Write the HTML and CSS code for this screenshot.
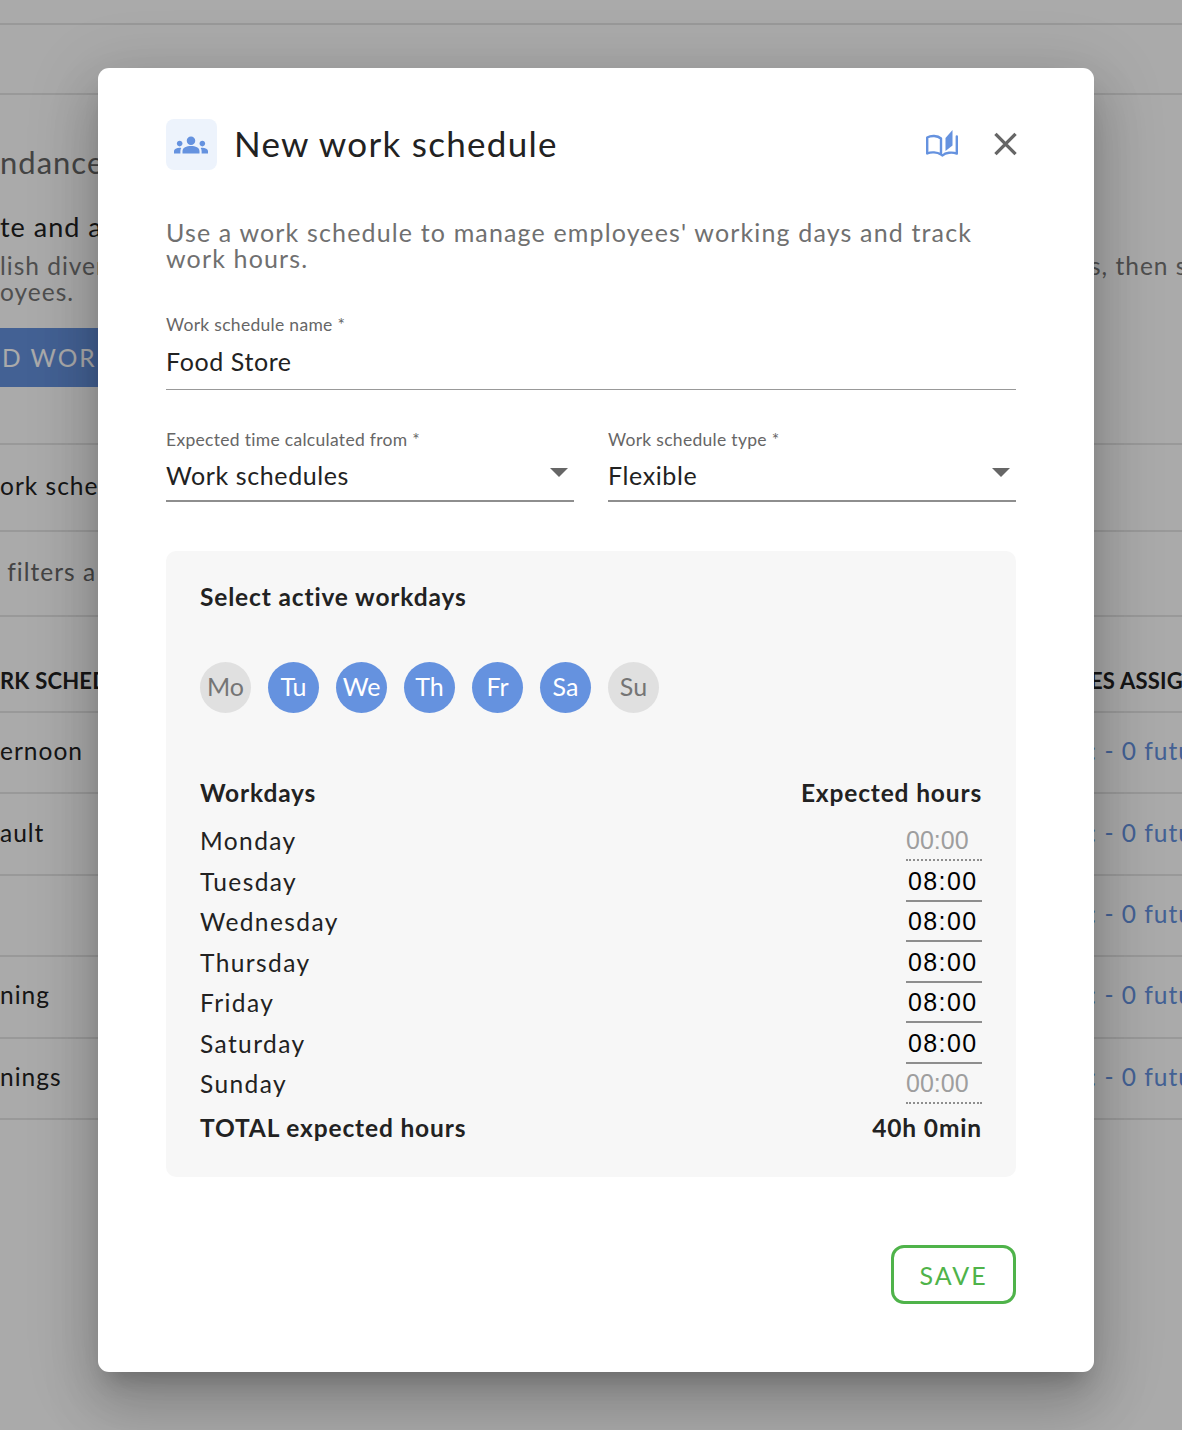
FILE: index.html
```html
<!DOCTYPE html>
<html lang="en">
<head>
<meta charset="utf-8">
<title>New work schedule</title>
<link rel="stylesheet" href="styles.css">
</head>
<body>
<div class="page">
  <div class="bg-band band-a"></div>
  <div class="bg-band band-b"></div>
  <section class="intro">
    <div class="intro-title">ndance</div>
    <div class="intro-sub">te and a</div>
    <div class="intro-text">
      <div class="intro-line"><span class="col-left">lish diver</span><span>s, then s</span></div>
      <div class="intro-line">oyees.</div>
    </div>
    <div class="add-btn">D WORK</div>
  </section>
  <div class="bg-row row-search"><span class="col-left">ork sche</span></div>
  <div class="bg-row row-filter"><span class="col-left">&nbsp;filters a</span></div>
  <div class="bg-row row-head"><span class="col-left">RK SCHED</span><span class="col-right">ES ASSIGN</span></div>
  <div class="bg-row"><span class="col-left">ernoon</span><span class="col-right link">: - 0 futu</span></div>
  <div class="bg-row"><span class="col-left">ault</span><span class="col-right link">: - 0 futu</span></div>
  <div class="bg-row"><span class="col-left"></span><span class="col-right link">: - 0 futu</span></div>
  <div class="bg-row"><span class="col-left">ning</span><span class="col-right link">: - 0 futu</span></div>
  <div class="bg-row"><span class="col-left">nings</span><span class="col-right link">: - 0 futu</span></div>
</div>
<div class="overlay"></div>
<main class="modal">
  <header class="modal-head">
    <div class="head-icon">
      <svg class="groups" viewBox="0 0 24 24" aria-hidden="true"><path d="M4 13c1.100 0 2-.9 2-2s-.9-2-2-2-2 .9-2 2 .9 2 2 2zm1.130 1.100c-.37-.06-.74-.1-1.130-.1-.99 0-1.930.21-2.780.58C.48 14.900 0 15.620 0 16.430V18h4.500v-1.610c0-.83.23-1.610.63-2.290zM20 13c1.100 0 2-.9 2-2s-.9-2-2-2-2 .9-2 2 .9 2 2 2zm4 3.430c0-.81-.48-1.530-1.220-1.850-.85-.37-1.790-.58-2.780-.58-.39 0-.76.04-1.130.1.4.68.63 1.460.63 2.290V18H24v-1.570zm-7.760-2.780c-1.170-.52-2.610-.9-4.240-.9-1.630 0-3.070.39-4.240.9C6.680 14.130 6 15.210 6 16.390V18h12v-1.610c0-1.180-.68-2.260-1.760-2.740zM12 12c1.660 0 3-1.340 3-3s-1.340-3-3-3-3 1.340-3 3 1.340 3 3 3z"/></svg>
    </div>
    <h1 class="modal-title">New work schedule</h1>
    <svg class="book" viewBox="0 0 32 27" aria-hidden="true">
      <path class="book-line" d="M1.200 7.500C5 5.300 11.500 5.300 15 8.500V24.500C11 22 5 21.800 1.200 23.500ZM15 24.500L16.500 25.500C19.500 22.500 26 21.800 30.800 23.500V6.500"/>
      <path class="book-fill" d="M19.500 8L26.500 0V15.500L19.500 21Z"/>
    </svg>
    <svg class="close" viewBox="0 0 24 24" aria-hidden="true"><path d="M1.500 1.500L22.500 22.500M22.500 1.500L1.500 22.500"/></svg>
  </header>
  <p class="intro-copy">Use a work schedule to manage employees' working days and track work hours.</p>
  <div class="field name-field">
    <label class="field-label">Work schedule name *</label>
    <div class="field-value">Food Store</div>
  </div>
  <div class="select-row">
    <div class="field select">
      <label class="field-label">Expected time calculated from *</label>
      <div class="field-value select-value">Work schedules<i class="caret"></i></div>
    </div>
    <div class="field select">
      <label class="field-label">Work schedule type *</label>
      <div class="field-value select-value">Flexible<i class="caret"></i></div>
    </div>
  </div>
  <section class="panel">
    <h2 class="panel-title">Select active workdays</h2>
    <div class="days">
      <span class="day">Mo</span>
      <span class="day on">Tu</span>
      <span class="day on">We</span>
      <span class="day on">Th</span>
      <span class="day on">Fr</span>
      <span class="day on">Sa</span>
      <span class="day">Su</span>
    </div>
    <div class="hours-head"><span>Workdays</span><span>Expected hours</span></div>
    <div class="hours-row"><span>Monday</span><span class="time off">00:00</span></div>
    <div class="hours-row"><span>Tuesday</span><span class="time">08:00</span></div>
    <div class="hours-row"><span>Wednesday</span><span class="time">08:00</span></div>
    <div class="hours-row"><span>Thursday</span><span class="time">08:00</span></div>
    <div class="hours-row"><span>Friday</span><span class="time">08:00</span></div>
    <div class="hours-row"><span>Saturday</span><span class="time">08:00</span></div>
    <div class="hours-row"><span>Sunday</span><span class="time off">00:00</span></div>
    <div class="hours-total"><span>TOTAL expected hours</span><span>40h 0min</span></div>
  </section>
  <div class="actions"><button class="save" type="button">SAVE</button></div>
</main>
</body>
</html>
```
FILE: styles.css
```css
* { box-sizing: border-box; }
html, body { margin: 0; height: 100%; }
body {
  width: 1182px;
  height: 1430px;
  overflow: hidden;
  position: relative;
  background: #fff;
  font-family: Lato, "Noto Sans", sans-serif;
  color: #222;
}

/* page behind the dialog */
.page { width: 1182px; height: 1430px; overflow: hidden; font-size: 24.500px; letter-spacing: 1px; color: #222; }
.bg-band { border-bottom: 2px solid #e6e6e6; }
.band-a { height: 25px; }
.band-b { height: 70px; }
.intro { height: 350px; border-bottom: 2px solid #e6e6e6; position: relative; }
.intro-title { padding-top: 46px; height: 113px; font-size: 31px; line-height: 42px; color: #666; }
.intro-sub { height: 45px; line-height: 38px; font-size: 27px; }
.intro-text { height: 75px; line-height: 26px; color: #777; font-size: 24.500px; }
.intro-line { display: flex; white-space: nowrap; }
.add-btn { width: 110px; height: 59px; background: #6592df; color: #fff; line-height: 59px; padding-left: 2px; letter-spacing: 2px; white-space: nowrap; overflow: hidden; }
.col-left { flex: none; width: 1090px; }
.col-right { flex: none; }
.bg-row { display: flex; align-items: center; height: 81.400px; padding-bottom: 4px; border-bottom: 2px solid #e6e6e6; white-space: nowrap; }
.row-search { height: 87px; }
.row-filter { height: 85px; color: #666; }
.row-head { height: 96px; padding: 50px 0 0; font-size: 22px; font-weight: 700; letter-spacing: .2px; align-items: flex-start; }
.link { color: #6592df; }

.overlay { position: absolute; inset: 0; background: rgba(0,0,0,.335); }

/* dialog */
.modal {
  position: absolute;
  left: 98px;
  top: 68px;
  width: 996px;
  height: 1304px;
  padding: 51px 78px 0 68px;
  background: #fff;
  border-radius: 11px;
  box-shadow: 0 16px 22px -10px rgba(0,0,0,.2), 0 34px 54px 4px rgba(0,0,0,.14), 0 13px 66px 12px rgba(0,0,0,.12);
}
.modal-head { display: flex; align-items: center; height: 51px; }
.head-icon { flex: none; width: 51px; height: 51px; border-radius: 8px; background: #edf3fc; display: flex; align-items: center; justify-content: center; }
.groups { width: 34px; height: 34px; margin-left: -2px; fill: #6592df; }
.modal-title { flex: 1; margin: -2px 0 0 17px; font-size: 35px; line-height: 51px; font-weight: 400; letter-spacing: 1.300px; color: #222; white-space: nowrap; }
.book { flex: none; width: 32px; height: 27px; margin: -2px 36px 0 0; }
.book-line { fill: none; stroke: #6592df; stroke-width: 2.400; stroke-linejoin: round; stroke-linecap: round; }
.book-fill { fill: #6592df; }
.close { flex: none; width: 23px; height: 24px; margin: -2px -1px 0 0; fill: none; stroke: #666; stroke-width: 3.500; }
.intro-copy { margin: 49px -10px 0 0; font-size: 25px; line-height: 26px; letter-spacing: 1.150px; color: #707070; }

.field-label { display: block; font-size: 17.500px; line-height: 22px; color: #666; letter-spacing: .3px; }
.field-value { font-size: 25px; color: #222; letter-spacing: .6px; }
.name-field { margin-top: 43px; height: 76px; border-bottom: 1px solid #999; }
.name-field .field-value { line-height: 32px; margin-top: 9px; }
.select-row { display: grid; grid-template-columns: 1fr 1fr; gap: 34px; margin-top: 39px; }
.select { height: 73px; border-bottom: 2px solid #8e8e8e; }
.select-value { display: flex; justify-content: space-between; align-items: center; line-height: 32px; margin-top: 8px; padding-right: 6px; }
.caret { width: 0; height: 0; border-left: 9px solid transparent; border-right: 9px solid transparent; border-top: 9px solid #666; margin-top: -6px; }

.panel { margin-top: 49px; height: 626px; padding: 30px 34px 0; background: #f7f7f7; border-radius: 10px; }
.panel-title { margin: 0; font-size: 24.500px; line-height: 32px; font-weight: 700; letter-spacing: .85px; color: #222; }
.days { display: flex; gap: 17px; margin-top: 49px; }
.day { width: 51px; height: 51px; border-radius: 50%; background: #e0e0e0; color: #757575; display: flex; align-items: center; justify-content: center; font-size: 25px; line-height: 1; padding-bottom: 3px; }
.day.on { background: #6592df; color: #fff; }
.hours-head { display: flex; justify-content: space-between; margin-top: 64px; height: 43px; font-size: 24.500px; line-height: 32px; font-weight: 700; letter-spacing: .85px; }
.hours-row { display: flex; justify-content: space-between; height: 40.500px; font-size: 24.500px; line-height: 40px; letter-spacing: 1.400px; color: #222; padding-top: 1px; }
.time { width: 76px; height: 41px; margin-top: -1px; padding-left: 2px; border-bottom: 2px solid #8e8e8e; font-family: "Liberation Sans", Arial, sans-serif; font-size: 25px; letter-spacing: 1.400px; color: #000; }
.time.off { padding-left: 0; letter-spacing: 0; color: #9e9e9e; border-bottom: 2px dotted #8e8e8e; }
.hours-total { display: flex; justify-content: space-between; margin-top: 8px; font-size: 24.500px; line-height: 32px; font-weight: 700; letter-spacing: .85px; }
.actions { display: flex; justify-content: flex-end; margin-top: 68px; }
.save { width: 125px; height: 59px; padding: 0; background: #fff; border: 3px solid #4fb34a; border-radius: 13px; color: #4fb34a; font: 400 25px Lato, sans-serif; letter-spacing: 2px; }
```
